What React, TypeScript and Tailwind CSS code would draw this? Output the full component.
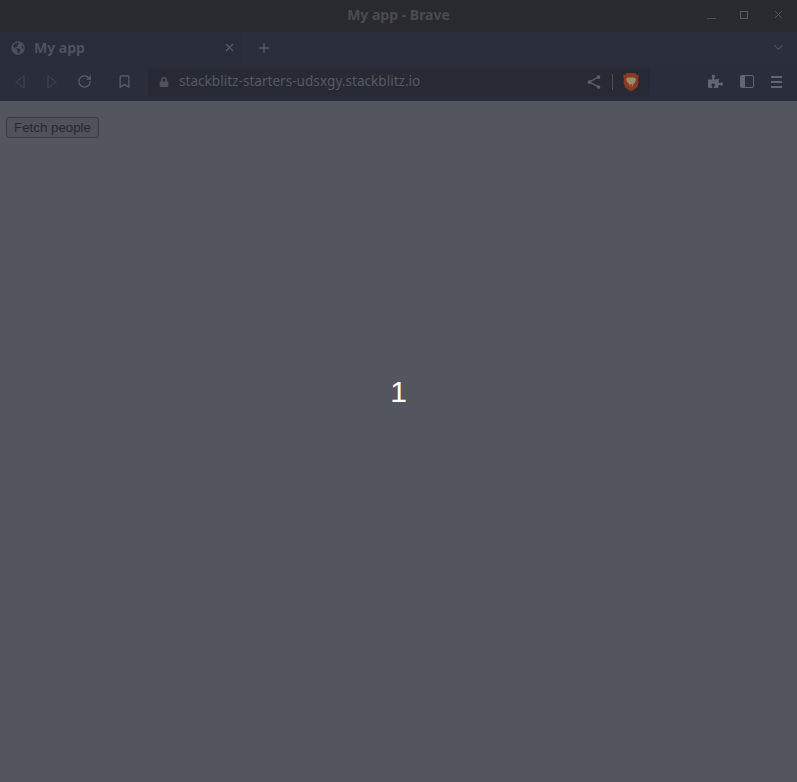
import { RotateCw, Bookmark, X, Plus, ChevronDown } from "lucide-react";
import { FaGlobeAmericas, FaPuzzlePiece, FaLock } from "react-icons/fa";

const BraveLogo = () => (
  <svg width="18" height="20" viewBox="0 0 18 20">
    <path d="M5 1h8l2 2 2-.4L16 8l.6 2.4-1.600 5L9 19.500l-6-4.100-1.600-5L2 8 1 2.600 3 3z" fill="#8a3a22" />
    <path d="M5.500 5.500h7l1.500 2-1 3-1.500 1.500-1 2.500H8l-1-2.500-1.500-1.500-1.500-3z" fill="#a0896f" />
    <path d="M7.500 12.500h3L9 15z" fill="#6d3a28" />
  </svg>
);

const NavTriangle = ({ flip }: { flip?: boolean }) => (
  <svg width="12" height="16" viewBox="0 0 12 16" fill="none" stroke="#3c404e" strokeWidth="1.500">
    <path d={flip ? "M2 2l8 6-8 6z" : "M10 2L2 8l8 6z"} strokeLinejoin="round" />
  </svg>
);

const ShareIcon = () => (
  <svg width="14" height="14" viewBox="0 0 14 14" fill="#5d606a" stroke="#5d606a" strokeWidth="1.300">
    <path d="M11.500 2L2.500 7l9 5" fill="none" />
    <circle cx="11.500" cy="2" r="1.200" />
    <circle cx="2.500" cy="7" r="1.200" />
    <circle cx="11.500" cy="12" r="1.200" />
  </svg>
);

export default function App() {
  return (
    <div className="h-[782px] w-[797px] flex flex-col overflow-hidden bg-[#53565e]">
      <header className="h-8 shrink-0 grid grid-cols-[1fr_auto_1fr] items-center bg-[#292a30] pb-[3px]">
        <span />
        <h1 className="text-center text-[14px] font-bold text-[#4a4b52] font-['Noto_Sans',sans-serif]">
          My app - Brave
        </h1>
        <div className="flex items-center justify-end gap-[24px] pr-[12px]">
          <span className="w-[9px] h-px bg-[#4d4e55] mt-2" />
          <span className="w-2 h-2 border border-[#5a5b62]" />
          <X size={13} strokeWidth={1.500} className="text-[#5a5b62]" />
        </div>
      </header>

      <div className="h-[31px] shrink-0 flex items-center bg-[#2b2f3d]">
        <div className="w-[242px] h-full flex items-center pl-[11px] pr-[6px] bg-[#292c3a]">
          <FaGlobeAmericas size={14} className="text-[#4d505b]" />
          <span className="ml-[9px] flex-1 text-[14px] font-bold text-[#4f525c] font-['Noto_Sans',sans-serif]">My app</span>
          <X size={13} className="text-[#5a5d68]" strokeWidth={2} />
        </div>
        <Plus size={16} strokeWidth={2} className="ml-[14px] text-[#5a5d68]" />
        <ChevronDown size={15} strokeWidth={2} className="ml-auto mr-[11px] text-[#4d505b]" />
      </div>

      <nav className="h-[38px] shrink-0 flex items-center bg-[#2a2d3b] pb-px">
        <div className="flex items-center pl-[14px]">
          <NavTriangle />
          <span className="ml-5"><NavTriangle flip /></span>
          <RotateCw size={15} strokeWidth={2} className="ml-[19px] text-[#5d606a]" />
          <Bookmark size={15} strokeWidth={2} className="ml-[25px] text-[#5d606a]" />
        </div>
        <div className="ml-[16px] h-7 w-[502px] flex items-center bg-[#272935] pl-[11px] pr-[10px] rounded-sm">
          <FaLock size={10} className="text-[#50535d]" />
          <span className="ml-[10px] flex-1 text-[13.600px] text-[#565963] font-['Noto_Sans',sans-serif]">
            stackblitz-starters-udsxgy.stackblitz.io
          </span>
          <ShareIcon />
          <span className="ml-[11px] w-px h-4 bg-[#4a4d58]" />
          <span className="ml-[9px]"><BraveLogo /></span>
        </div>
        <div className="ml-auto flex items-center gap-[17px] pr-[15px]">
          <FaPuzzlePiece size={15} className="text-[#63666f]" />
          <span className="w-[14px] h-[13px] rounded-[2px] border border-[#63666f] border-l-[5px]" />
          <div className="w-[11px] flex flex-col gap-[3px]">
            <span className="h-[2px] bg-[#63666f]" />
            <span className="h-[2px] bg-[#63666f]" />
            <span className="h-[2px] bg-[#63666f]" />
          </div>
        </div>
      </nav>

      <main className="flex-1 flex flex-col items-start font-['Liberation_Sans',Arial,sans-serif]">
        <button className="mt-4 ml-[6px] h-[21px] w-[93px] text-[13.300px] leading-none text-[#26282e] bg-[#4f5259] border border-[#373a41] rounded-[3px] font-['Liberation_Sans',Arial,sans-serif]">
          Fetch people
        </button>
        <div className="flex-1 w-full flex items-center justify-center pb-[136px]">
          <span className="text-[30px] leading-none text-white font-['Liberation_Sans',Arial,sans-serif]">1</span>
        </div>
      </main>
    </div>
  );
}
